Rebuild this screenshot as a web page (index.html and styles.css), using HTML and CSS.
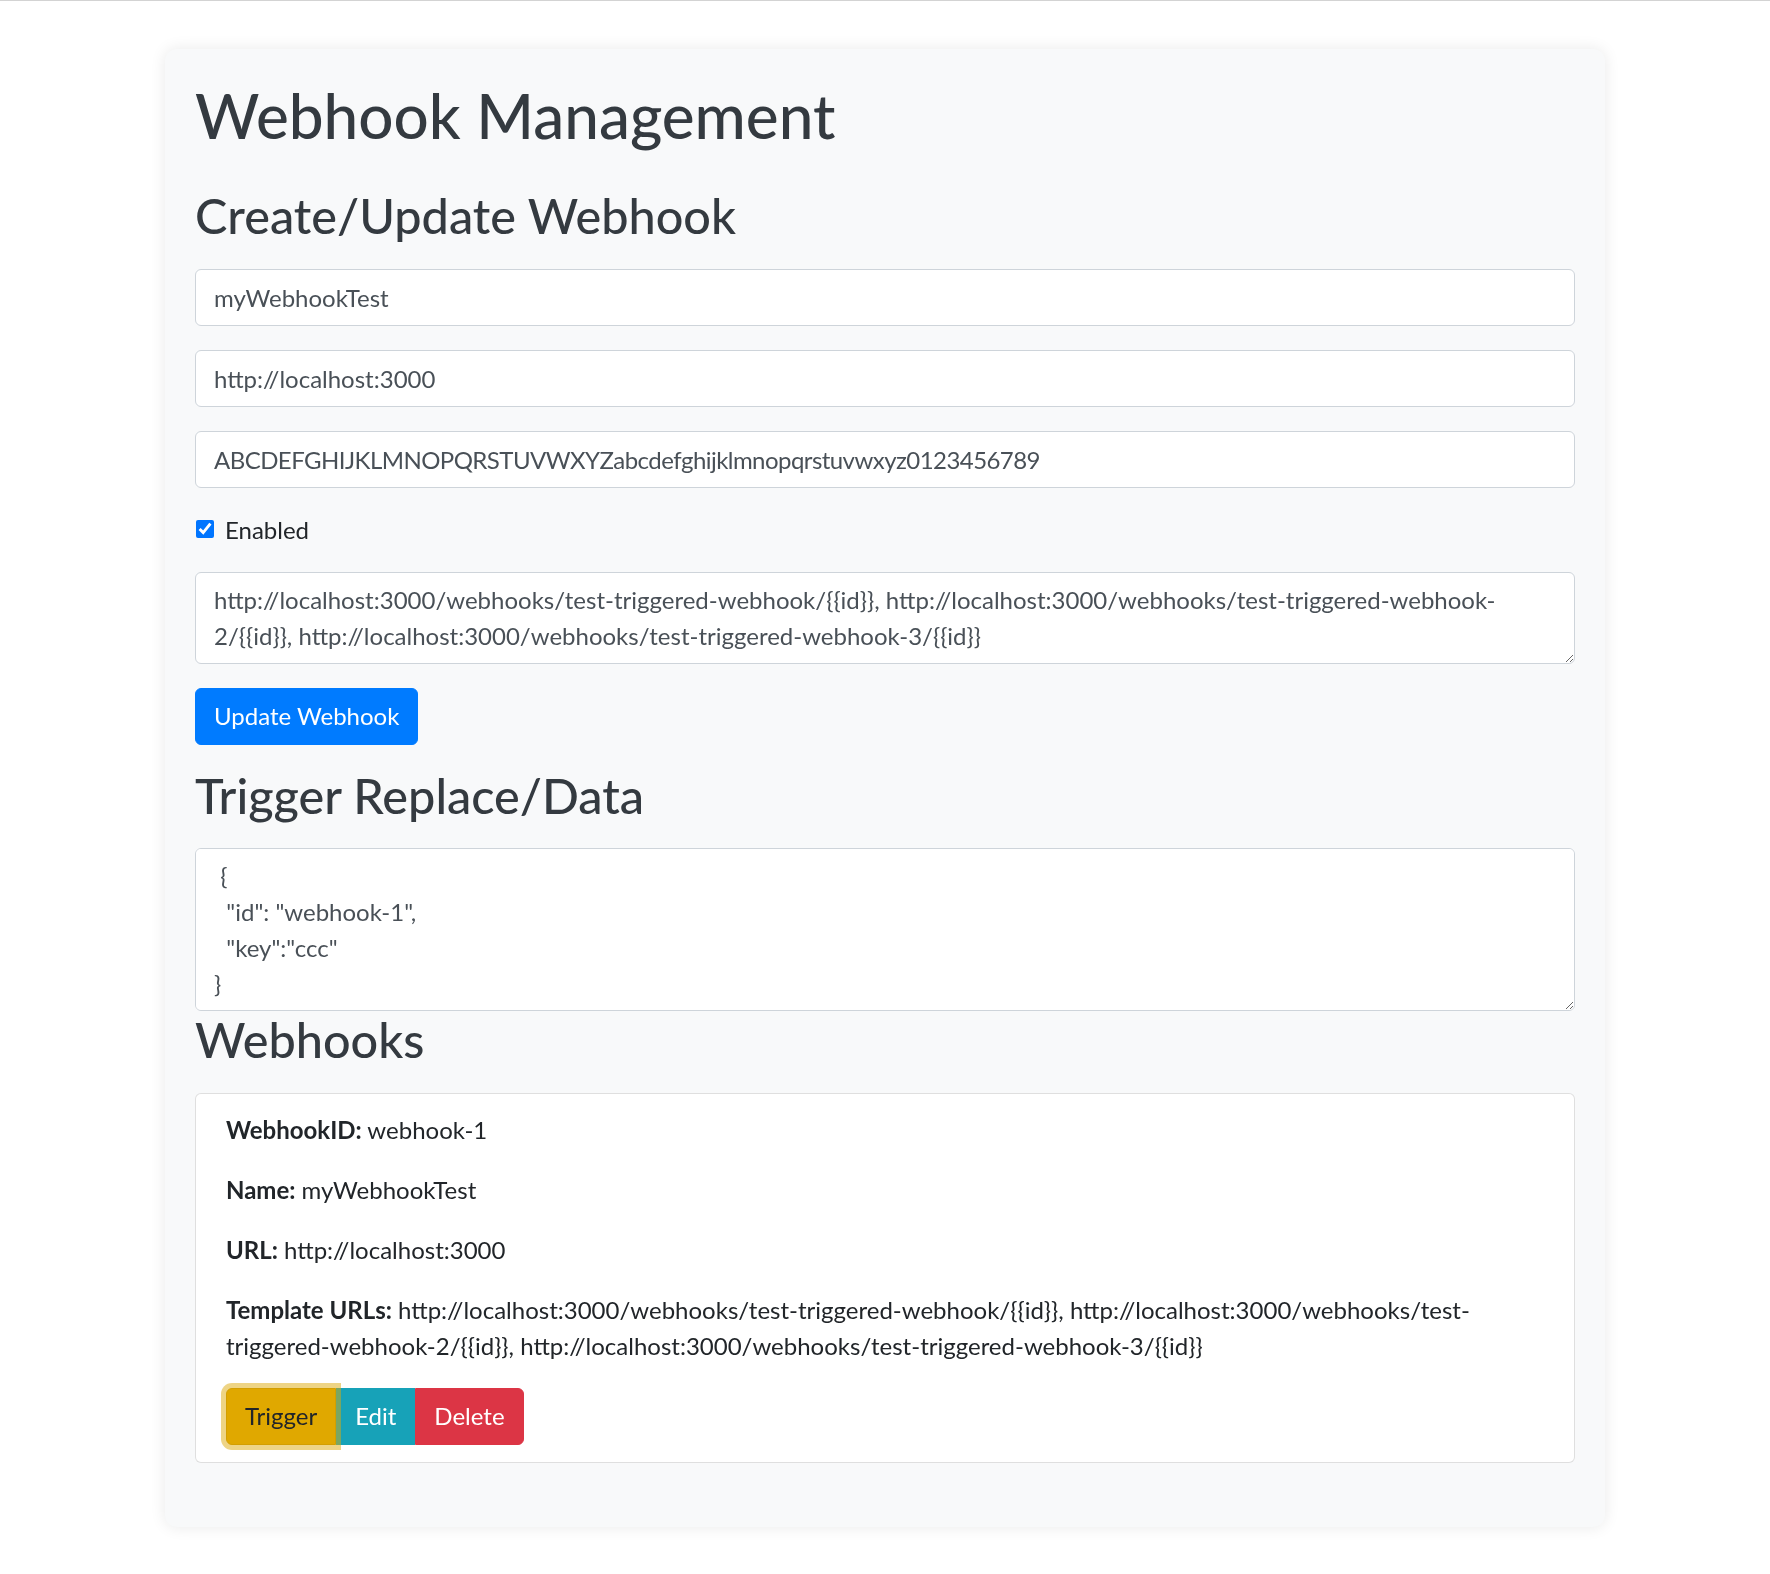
FILE: index.html
```html
<!DOCTYPE html>
<html lang="en">
<head>
<meta charset="utf-8">
<title>Webhook Management</title>
<link rel="stylesheet" href="styles.css">
</head>
<body>
<div class="container">
  <h1 class="title">Webhook Management</h1>

  <h2 class="section-title">Create/Update Webhook</h2>
  <form class="webhook-form">
    <div class="form-group">
      <input class="form-control" type="text" value="myWebhookTest">
    </div>
    <div class="form-group">
      <input class="form-control" type="text" value="http://localhost:3000">
    </div>
    <div class="form-group">
      <input class="form-control key-input" type="text" value="ABCDEFGHIJKLMNOPQRSTUVWXYZabcdefghijklmnopqrstuvwxyz0123456789">
    </div>
    <div class="form-check">
      <input class="form-check-input" type="checkbox" id="enabled" checked>
      <label class="form-check-label" for="enabled">Enabled</label>
    </div>
    <div class="form-group">
      <textarea class="form-control textarea" rows="2">http://localhost:3000/webhooks/test-triggered-webhook/{{id}}, http://localhost:3000/webhooks/test-triggered-webhook-2/{{id}}, http://localhost:3000/webhooks/test-triggered-webhook-3/{{id}}</textarea>
    </div>
    <button type="button" class="btn btn-primary">Update Webhook</button>
  </form>

  <h2 class="section-title">Trigger Replace/Data</h2>
  <textarea class="form-control textarea data-area" rows="4"> {
  "id": "webhook-1",
  "key":"ccc"
}</textarea>

  <h2 class="section-title">Webhooks</h2>
  <div class="wh-card">
    <p><strong>WebhookID:</strong> webhook-1</p>
    <p><strong>Name:</strong> myWebhookTest</p>
    <p><strong>URL:</strong> http://localhost:3000</p>
    <p><strong>Template URLs:</strong> http://localhost:3000/webhooks/test-triggered-webhook/{{id}}, http://localhost:3000/webhooks/test-triggered-webhook-2/{{id}}, http://localhost:3000/webhooks/test-triggered-webhook-3/{{id}}</p>
    <div class="btn-group">
      <button type="button" class="btn btn-warning focused">Trigger</button>
      <button type="button" class="btn btn-info">Edit</button>
      <button type="button" class="btn btn-danger">Delete</button>
    </div>
  </div>
</div>
</body>
</html>
```
FILE: styles.css
```css
html, body {
  margin: 0;
  padding: 0;
}

body {
  background: #fff;
  border-top: 1px solid #d3d3d3;
  font-family: "Lato", "Open Sans", sans-serif;
  font-size: 24px;
  line-height: 36px;
  color: #212529;
}

.container {
  width: 1440px;
  box-sizing: border-box;
  margin: 48px auto 45px;
  padding: 30px 30px 30px;
  background: #f8f9fa;
  border-radius: 12px;
  box-shadow: 0 0 16px rgba(0, 0, 0, 0.09);
}

.title {
  margin: 0 0 36px;
  font-size: 62px;
  line-height: 72px;
  font-weight: 500;
  color: #343a40;
}

.section-title {
  margin: 0 0 24px;
  font-size: 48.6px;
  line-height: 57.6px;
  font-weight: 500;
  color: #343a40;
}

.webhook-form {
  margin: 0 0 22px;
}

.form-group {
  margin-bottom: 24px;
}

.form-control {
  display: block;
  width: 100%;
  box-sizing: border-box;
  height: 57px;
  padding: 9px 18px;
  font-family: "Lato", "Open Sans", sans-serif;
  font-size: 24px;
  line-height: 36px;
  color: #495057;
  background: #fff;
  border: 1px solid #ced4da;
  border-radius: 6px;
  outline: none;
}

.key-input {
  letter-spacing: -0.55px;
}

.textarea {
  height: auto;
  resize: vertical;
  overflow: auto;
}

.data-area {
  height: 163px;
  margin: 0;
}

.form-check {
  display: flex;
  align-items: flex-start;
  margin-bottom: 24px;
  line-height: 36px;
}

.form-check-input {
  width: 18px;
  height: 18px;
  margin: 8px 11px 0 1px;
  accent-color: #0075ff;
}

.form-check-label {
  color: #212529;
}

.btn {
  display: inline-block;
  box-sizing: border-box;
  height: 57px;
  padding: 9px 18px;
  font-family: "Lato", "Open Sans", sans-serif;
  font-size: 24px;
  line-height: 36px;
  font-weight: 400;
  border: 1px solid transparent;
  border-radius: 6px;
  cursor: pointer;
}

.btn-primary {
  color: #fff;
  background: #007bff;
  border-color: #007bff;
}

.btn-warning {
  color: #212529;
  background: #e0a800;
  border-color: #d39e00;
}

.btn-info {
  color: #fff;
  background: #17a2b8;
  border-color: #17a2b8;
}

.btn-danger {
  color: #fff;
  background: #dc3545;
  border-color: #dc3545;
}

.wh-card {
  background: #fff;
  border: 1px solid rgba(0, 0, 0, 0.125);
  border-radius: 6px;
  padding: 18px 30px 17px;
  margin-bottom: 34px;
}

.wh-card p {
  margin: 0 0 24px;
}

.wh-card strong {
  font-weight: 700;
}

.btn-group {
  display: inline-flex;
  vertical-align: top;
}

.btn-group .btn {
  border-radius: 0;
  position: relative;
}

.btn-group .btn:first-child {
  border-top-left-radius: 6px;
  border-bottom-left-radius: 6px;
}

.btn-group .btn:last-child {
  border-top-right-radius: 6px;
  border-bottom-right-radius: 6px;
}

.btn-group .focused {
  z-index: 1;
  box-shadow: 0 0 0 5px rgba(222, 170, 12, 0.5);
}
```
